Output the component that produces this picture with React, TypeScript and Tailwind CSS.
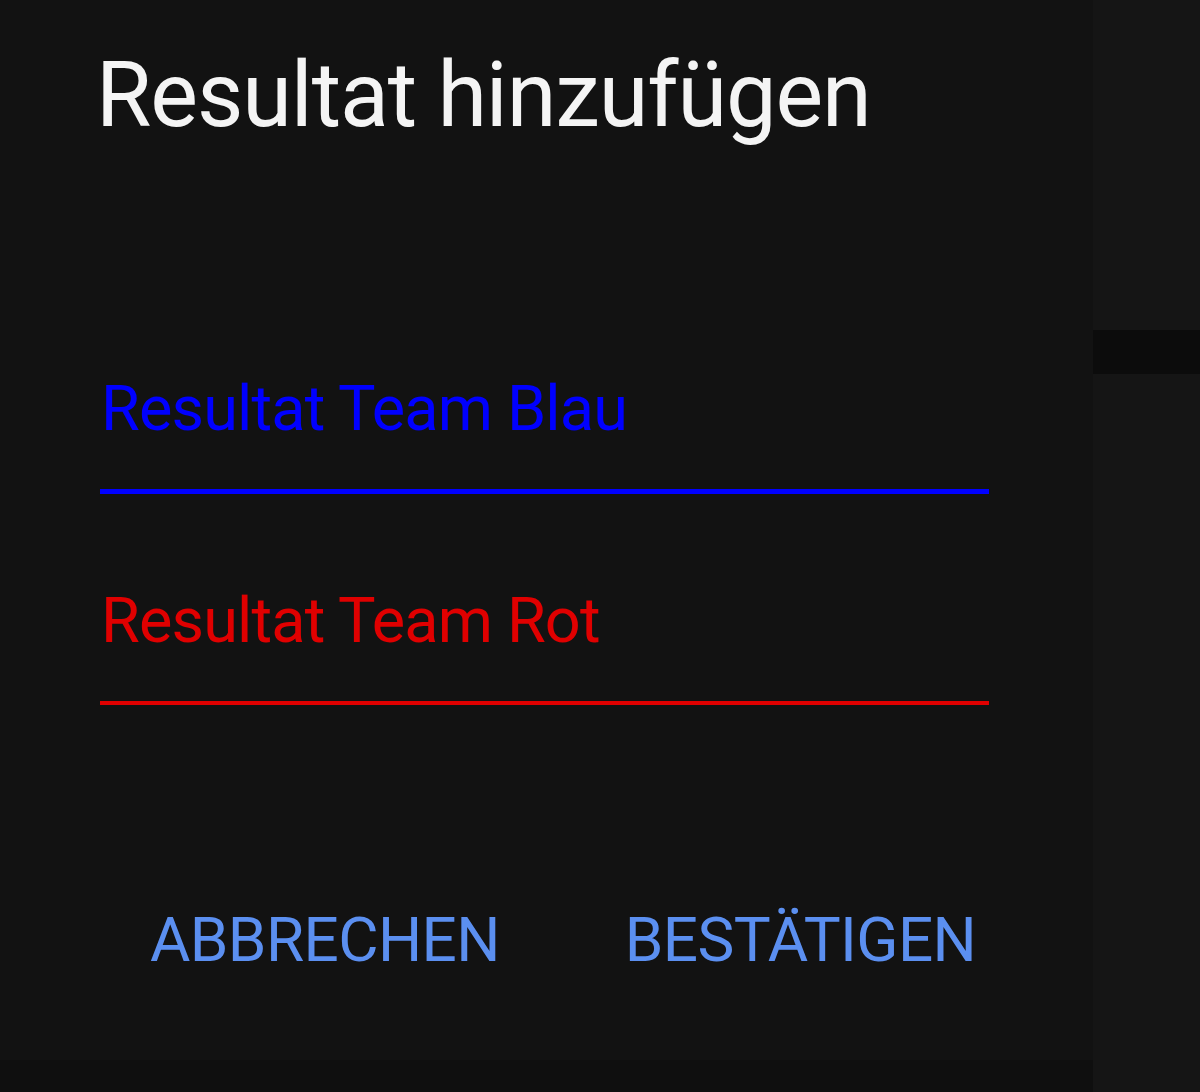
import React from "react";

export default function App() {
  return (
    <div
      className="w-[1200px] h-[1092px] bg-[#121212] flex overflow-hidden"
      style={{ fontFamily: "Roboto, 'Noto Sans', sans-serif" }}
    >
      <div className="w-[1093px] flex flex-col">
        <div className="h-[1060px] bg-[#121212] flex flex-col pl-[96px]">
          <h1 className="text-[90px] leading-none text-[#f4f4f4] mt-[51px] tracking-[-1.1px] font-normal">
            Resultat hinzufügen
          </h1>
          <div className="mt-[236px] ml-[4px] w-[889px] flex flex-col">
            <div className="pl-[1px] text-[63px] leading-none text-[#0000ff] tracking-[-0.85px]">
              Resultat Team Blau
            </div>
            <div className="mt-[49px] h-[5px] bg-[#0000ff]" />
            <div className="mt-[95px] pl-[1px] text-[63px] leading-none text-[#e00000] tracking-[-0.85px]">
              Resultat Team Rot
            </div>
            <div className="mt-[49px] h-[4px] bg-[#e00000]" />
          </div>
          <div className="mt-[204px] flex gap-[125px] pl-[54px]">
            <span className="text-[62px] leading-none text-[#5b8ff0] tracking-[-0.6px]">ABBRECHEN</span>
            <span className="text-[62px] leading-none text-[#5b8ff0] tracking-[-0.6px]">BESTÄTIGEN</span>
          </div>
        </div>
        <div className="flex-1 bg-[#0f0f0f]" />
      </div>
      <div className="flex-1 bg-[#151515] flex flex-col">
        <div className="mt-[330px] h-[44px] bg-[#0c0c0c]" />
      </div>
    </div>
  );
}
